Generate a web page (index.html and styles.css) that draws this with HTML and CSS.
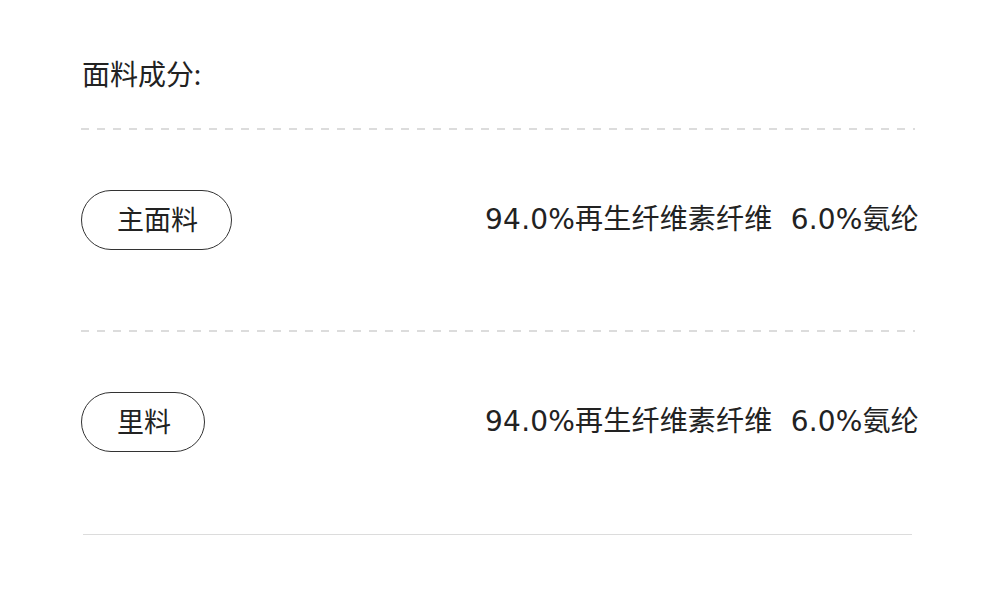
FILE: index.html
```html
<!DOCTYPE html>
<html lang="zh">
<head>
<meta charset="utf-8">
<link rel="stylesheet" href="styles.css">
</head>
<body>
<div class="wrap">
  <div class="title">面料成分:</div>
  <div class="dash"></div>
  <div class="row">
    <div class="pill">主面料</div>
    <div class="val">94.0%再生纤维素纤维&nbsp; 6.0%氨纶</div>
  </div>
  <div class="dash"></div>
  <div class="row">
    <div class="pill">里料</div>
    <div class="val">94.0%再生纤维素纤维&nbsp; 6.0%氨纶</div>
  </div>
  <div class="solid"></div>
</div>
</body>
</html>
```
FILE: styles.css
```css
html, body { margin: 0; padding: 0; background: #fff; }
body {
  font-family: "Lato", "Noto Sans CJK SC", sans-serif;
  color: #222;
}
.wrap {
  width: 838px;
  margin-left: 81px;
}
.title {
  padding-top: 54px;
  font-size: 28px;
  line-height: 40px;
  padding-left: 1px;
  box-sizing: border-box;
  height: 128px;
}
.dash {
  width: 834px;
  height: 2px;
  background: repeating-linear-gradient(to right, #dcdcdc 0 8px, transparent 8px 16px);
}
.row {
  display: flex;
  justify-content: space-between;
  align-items: center;
  height: 200px;
  box-sizing: border-box;
  padding-bottom: 21px;
}
.pill {
  height: 60px;
  box-sizing: border-box;
  border: 1px solid #333;
  border-radius: 30px;
  padding: 0 33px 0 35px;
  font-size: 27px;
  line-height: 58px;
}
.val {
  font-family: "DejaVu Sans", "Noto Sans CJK SC", sans-serif;
  font-size: 28px;
  line-height: 40px;
  letter-spacing: 0.2px;
}
.solid {
  width: 829px;
  margin-left: 2px;
  height: 1px;
  margin-top: 2px;
  background: #dcdcdc;
}
```
